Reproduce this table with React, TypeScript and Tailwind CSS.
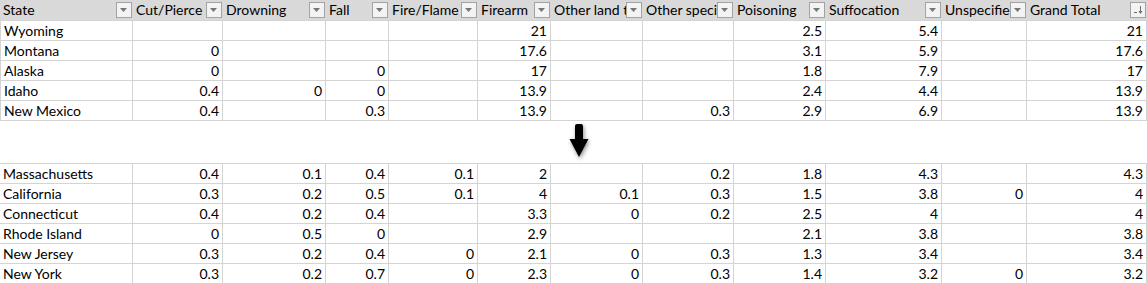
import React from "react";

const headers = [
    "State",
    "Cut/Pierce",
    "Drowning",
    "Fall",
    "Fire/Flame",
    "Firearm",
    "Other land transport",
    "Other specified",
    "Poisoning",
    "Suffocation",
    "Unspecified",
    "Grand Total",
];

type Row = [string, ...string[]];

const topRows: Row[] = [
    ["Wyoming", "", "", "", "", "21", "", "", "2.5", "5.4", "", "21"],
    ["Montana", "0", "", "", "", "17.6", "", "", "3.1", "5.9", "", "17.6"],
    ["Alaska", "0", "", "0", "", "17", "", "", "1.8", "7.9", "", "17"],
    ["Idaho", "0.4", "0", "0", "", "13.9", "", "", "2.4", "4.4", "", "13.9"],
    ["New Mexico", "0.4", "", "0.3", "", "13.9", "", "0.3", "2.9", "6.9", "", "13.9"],
];

const bottomRows: Row[] = [
    ["Massachusetts", "0.4", "0.1", "0.4", "0.1", "2", "", "0.2", "1.8", "4.3", "", "4.3"],
    ["California", "0.3", "0.2", "0.5", "0.1", "4", "0.1", "0.3", "1.5", "3.8", "0", "4"],
    ["Connecticut", "0.4", "0.2", "0.4", "", "3.3", "0", "0.2", "2.5", "4", "", "4"],
    ["Rhode Island", "0", "0.5", "0", "", "2.9", "", "", "2.1", "3.8", "", "3.8"],
    ["New Jersey", "0.3", "0.2", "0.4", "0", "2.1", "0", "0.3", "1.3", "3.4", "", "3.4"],
    ["New York", "0.3", "0.2", "0.7", "0", "2.3", "0", "0.3", "1.4", "3.2", "0", "3.2"],
];

const cols =
    "grid grid-cols-[133px_90px_103px_63px_89px_73px_92px_91px_92px_116px_85px_120px]";

function FilterButton({ sorted }: { sorted?: boolean }) {
    return (
        <div className="w-[16px] h-[16px] shrink-0 border border-[#a3a3a3] bg-[#f3f3f3] flex items-center justify-center">
            {sorted ? (
                <svg width="12" height="12" viewBox="0 0 12 12">
                    <line x1="2" y1="8.5" x2="5" y2="8.5" stroke="#6b6b6b" strokeWidth="1" />
                    <line x1="8.5" y1="2" x2="8.5" y2="9" stroke="#6b6b6b" strokeWidth="1" />
                    <path d="M6.5 7 L8.5 10 L10.5 7 Z" fill="#6b6b6b" />
                </svg>
            ) : (
                <svg width="8" height="5" viewBox="0 0 8 5">
                    <path d="M0 0 H7 L3.5 4 Z" fill="#767676" />
                </svg>
            )}
        </div>
    );
}

function HeaderRow() {
    return (
        <div className={`${cols} h-[21px] bg-[#d9d9d9] border-b border-[#d4d4d4]`}>
            {headers.map((h, i) => (
                <div key={h} className="flex items-center pl-[3px] pr-[1px] overflow-hidden">
                    <span className="flex-1 overflow-hidden whitespace-nowrap">{h}</span>
                    <FilterButton sorted={i === headers.length - 1} />
                </div>
            ))}
        </div>
    );
}

function DataRow({ row, edge }: { row: Row; edge?: boolean }) {
    return (
        <div className={`${cols} h-[20px]`}>
            {row.map((v, i) => (
                <div
                    key={i}
                    className={
                        i === 0
                            ? `flex items-center pl-[3px] border-r border-b border-[#d4d4d4] whitespace-nowrap overflow-hidden ${edge ? "border-l" : ""}`
                            : "flex items-center justify-end pr-[3px] border-r border-b border-[#d4d4d4]"
                    }
                >
                    {v}
                </div>
            ))}
        </div>
    );
}

export default function App() {
    return (
        <div className="w-[1147px] h-[284px] bg-white overflow-hidden text-black text-[14px] leading-none font-['Lato','Liberation_Sans',sans-serif]">
            <HeaderRow />
            {topRows.map((r) => (
                <DataRow key={r[0]} row={r} edge />
            ))}
            <div className="h-[43px] flex items-center pl-[566px] border-b border-[#d4d4d4]">
                <svg width="26" height="40" viewBox="0 0 26 40" className="drop-shadow-[1px_2px_2px_rgba(0,0,0,0.45)]">
                    <path d="M9 4 Q9 2 11 2 H15 Q17 2 17 4 V17 H22.5 L13 35 L3.5 17 H9 Z" fill="#000" />
                </svg>
            </div>
            {bottomRows.map((r) => (
                <DataRow key={r[0]} row={r} />
            ))}
        </div>
    );
}
